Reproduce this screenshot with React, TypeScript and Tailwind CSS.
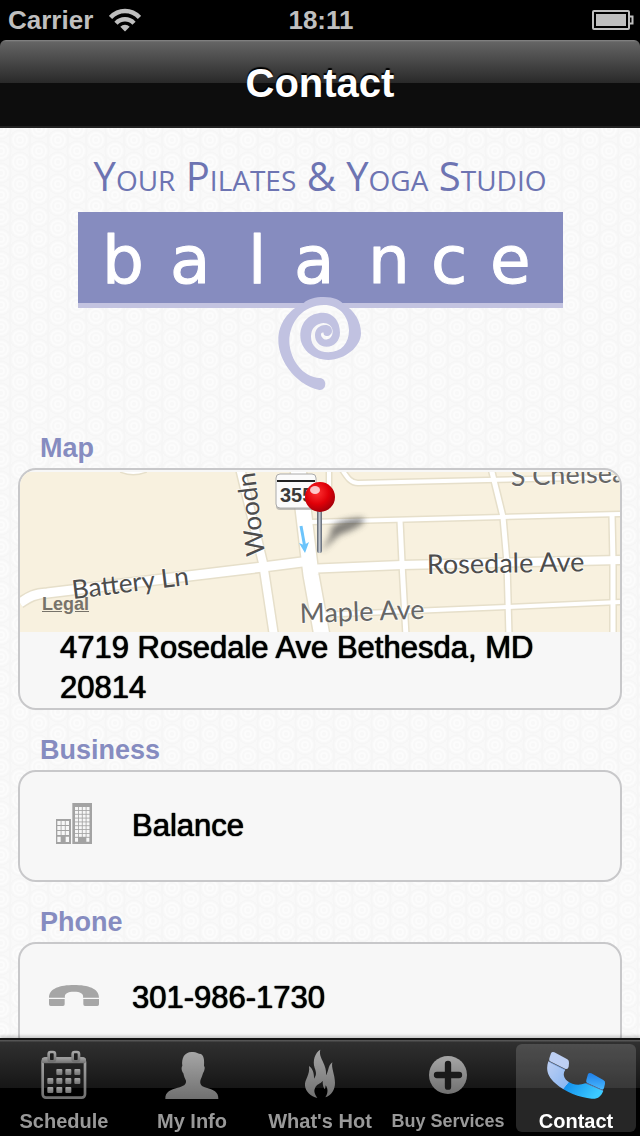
import type { ReactNode } from "react";
import clsx from "clsx";

function StatusBar() {
  return (
    <div className="grid h-10 shrink-0 grid-cols-3 items-center bg-black pr-1.5 pl-2 text-[26px] leading-10 font-bold text-[#bfbfbf]">
      <div className="flex items-center gap-4">
        <span>Carrier</span>
        <svg className="h-6 w-8" viewBox="0 0 32 24" fill="none" stroke="#bfbfbf" strokeWidth="4.5">
          <path d="M1.5 9.5 C9.5 0.8 22.5 0.8 30.5 9.5" />
          <path d="M7 15.2 C12 10 20 10 25 15.2" />
          <path d="M16 23.5 L11.3 18.8 C14 16 18 16 20.7 18.8 Z" fill="#bfbfbf" stroke="none" />
        </svg>
      </div>
      <span className="text-center">18:11</span>
      <svg className="h-5 w-[42px] justify-self-end" viewBox="0 0 42 20">
        <rect x="1" y="1" width="36" height="18" rx="1" fill="none" stroke="#bfbfbf" strokeWidth="2" />
        <rect x="4" y="4" width="30" height="12" fill="#bfbfbf" />
        <path d="M38 6.5 h2.5 v7 h-2.5" fill="none" stroke="#bfbfbf" strokeWidth="2" />
      </svg>
    </div>
  );
}

// faint concentric rings tiled behind the page
function Wallpaper() {
  const centers = [
    [19, 11],
    [0, 0],
    [38, 0],
    [0, 22],
    [38, 22],
  ];
  return (
    <svg className="absolute inset-0 h-full w-full" aria-hidden="true">
      <defs>
        <pattern id="rings" width="38" height="22" patternUnits="userSpaceOnUse" patternTransform="translate(1 1)">
          <rect width="38" height="22" fill="#f9f9f9" />
          <path d="M9 0 V22 M29 0 V22" stroke="#f6f6f6" strokeWidth="2" />
          {centers.map(([x, y]) => (
            <g key={`${x}-${y}`} fill="none" stroke="#fcfcfc" strokeWidth="2">
              <circle cx={x} cy={y} r="10" fill="#f8f8f8" stroke="#f6f6f6" strokeWidth="1" />
              <circle cx={x} cy={y} r="7" />
              <circle cx={x} cy={y} r="3" />
            </g>
          ))}
        </pattern>
      </defs>
      <rect width="100%" height="100%" fill="url(#rings)" />
    </svg>
  );
}

function Logo() {
  return (
    <div className="flex flex-col items-center pt-7 pb-9">
      <p className="font-['Open_Sans'] text-[40px] leading-10 font-medium whitespace-nowrap text-[#6d74b2] [font-variant-caps:small-caps]">
        Your Pilates &amp; Yoga Studio
      </p>
      <svg className="mt-4 h-[180px] w-[485px]" viewBox="0 0 485 180">
        <rect width="485" height="92" fill="#868cbf" />
        <rect y="91" width="485" height="5" fill="#c3c3e0" />
        <text
          x="24 92 170 216 290 353 412"
          y="71"
          fill="#fff"
          stroke="#fff"
          strokeWidth="1"
          strokeLinejoin="round"
          fontFamily="DejaVu Sans, sans-serif"
          fontSize="66"
        >
          balance
        </text>
        <g transform="translate(182 78) scale(0.3333)">
          <path d="M120 62 C150 46 170 42 192 42 C215 42 235 48 250 62Z" fill="#fafafa" />
          <path
            fill="#c1c2e1"
            d="M178 300 C110 285 55 215 55 150 C55 100 85 60 132 38 C145 27 165 21 192 21 C222 21 240 30 250 42 C285 62 303 95 303 130 C303 170 255 210 205 210 C155 208 121 175 121 137 C121 95 150 68 190 68 C222 70 240 95 240 128 C240 152 222 170 200 170 C178 170 165 155 165 135 C165 118 178 105 196 105 C208 105 216 112 216 122 C216 132 208 139 199 138 C194 138 190 134 191 128 C183 126 181 134 185 140 C190 148 196 150 202 148 C212 146 218 135 218 125 C218 108 205 99 190 99 C168 101 153 115 153 140 C153 168 175 187 205 187 C245 186 267 160 267 120 C265 75 235 45 192 45 C130 45 88 95 88 155 C90 210 130 262 180 264 C203 266 200 303 178 300Z"
          />
        </g>
      </svg>
    </div>
  );
}

const roads = [
  { d: "M0 131 C8 126 12 122 27 121 L243 95 L290 89", w: 9 },
  { d: "M285 97 L382 93 L600 88", w: 8 },
  { d: "M220 -4 L243 91 L254 164", w: 8 },
  { d: "M278 -4 L283 36 L291 103 L302 164", w: 15 },
  { d: "M290 50 L483 45 L600 42", w: 4 },
  { d: "M309 -4 V20", w: 4 },
  { d: "M321 -4 C327 5 330 11 338 11 L467 8 L600 5", w: 4 },
  { d: "M471 -4 L483 45 L487 91 L489 164", w: 5 },
  { d: "M380 48 L382 91 L386 164", w: 5 },
  { d: "M592 42 L593 91 V164", w: 5 },
  { d: "M296 143 L487 135 L600 130", w: 4 },
  { d: "M101 -2 Q113 3 126 -2", w: 3 },
];

function MapView() {
  return (
    <div className="relative h-40 overflow-hidden">
      <svg className="h-full w-full" viewBox="0 0 600 160" preserveAspectRatio="xMidYMid slice">
        <defs>
          <radialGradient id="pinHead" cx="0.4" cy="0.35" r="0.65">
            <stop offset="0" stopColor="#f33" />
            <stop offset="0.6" stopColor="#e00008" />
            <stop offset="1" stopColor="#a8000a" />
          </radialGradient>
          <linearGradient id="pinStem">
            <stop offset="0" stopColor="#555d68" />
            <stop offset="0.5" stopColor="#c5cad2" />
            <stop offset="1" stopColor="#59616d" />
          </linearGradient>
          <filter id="soft" x="-30%" y="-30%" width="160%" height="160%">
            <feGaussianBlur stdDeviation="3" />
          </filter>
        </defs>
        <rect width="600" height="160" fill="#f8f1df" />
        <g fill="none" stroke="#e6dfca">
          {roads.map((r) => (
            <path key={r.d} d={r.d} strokeWidth={r.w + 3} />
          ))}
        </g>
        <g fill="none" stroke="#fff">
          {roads.map((r) => (
            <path key={r.d} d={r.d} strokeWidth={r.w} />
          ))}
        </g>
        <g
          fontFamily="Lato, sans-serif"
          fontSize="27"
          fill="#4d4d4d"
          stroke="#fff"
          strokeOpacity="0.5"
          strokeWidth="2"
          paintOrder="stroke"
        >
          <text transform="translate(53 127) rotate(-7)" fontSize="26">
            Battery Ln
          </text>
          <text transform="translate(245 83) rotate(-97)" fontSize="26">
            Woodn
          </text>
          <text transform="translate(407 102) rotate(-1)">Rosedale Ave</text>
          <text transform="translate(280 151) rotate(-2)" fill="#666">
            Maple Ave
          </text>
          <text transform="translate(491 14) rotate(-2)" fill="#666">
            S Chelsea
          </text>
        </g>
        <rect x="256" y="4" width="40" height="34" rx="4" fill="#999" opacity="0.6" />
        <rect x="256" y="2" width="40" height="34" rx="4" fill="#fbfbfb" stroke="#aaa" />
        <path d="M257 9 H295" stroke="#222" strokeWidth="2" />
        <text x="260" y="30" fontSize="20" fontWeight="bold" fill="#3a3a3a" fontFamily="Liberation Sans Narrow, Liberation Sans, sans-serif">
          355
        </text>
        <path d="M281 54 L285 76" fill="none" stroke="#6cc4fb" strokeWidth="3" />
        <path d="M279 71 L284 73 L289 70 L285 81Z" fill="#6cc4fb" />
        <path d="M301 80 L311 62 C308 52 326 46 343 46 C348 51 334 58 319 63 Z" fill="#444" opacity="0.65" filter="url(#soft)" />
        <rect x="297" y="38" width="5" height="43" rx="2" fill="url(#pinStem)" />
        <circle cx="300" cy="25" r="15" fill="url(#pinHead)" />
        <ellipse cx="295" cy="18" rx="5" ry="4" fill="#fff" opacity="0.75" />
      </svg>
      <a href="#legal" className="absolute bottom-4 left-[22px] text-[18px] leading-6 font-bold text-[#77736a] underline">
        Legal
      </a>
    </div>
  );
}

function BuildingIcon() {
  const windows: ReactNode[] = [];
  for (let r = 0; r < 8; r++) {
    for (let c = 0; c < 4; c++) {
      windows.push(<rect key={`t${r}${c}`} x={225 + c * 11.5} y={231 + r * 11.5} width="9" height="9" />);
    }
  }
  for (let r = 0; r < 3; r++) {
    for (let c = 0; c < 3; c++) {
      windows.push(<rect key={`s${r}${c}`} x={172 + c * 12.5} y={273 + r * 15} width="10" height="12" />);
    }
  }
  return (
    <svg className="h-[50px] w-[60px]" viewBox="132 213 180 150">
      <path d="M217 219 h59 v123 h-59z M168 267 h45 v75 h-45z" fill="#a3a3a3" />
      <g fill="#f7f7f7">
        {windows}
        <path d="M225 323 h9 v12 h-9z M259 323 h9 v12 h-9z M172 320 h10 v16 h-10z M197 320 h10 v16 h-10z" />
      </g>
    </svg>
  );
}

function HandsetIcon() {
  return (
    <svg className="h-[50px] w-[60px]" viewBox="132 729 180 150" fill="#a6a6a6">
      <path d="M147 803 C147 775 180 765 222 765 C264 765 297 775 297 803 H249 C252 790 240 785 222 785 C204 785 192 790 195 803Z" />
      <path d="M147 807 h47 v16 q0 5 -5 5 h-37 q-5 0 -5 -5z M250 807 h47 v16 q0 5 -5 5 h-37 q-5 0 -5 -5z" />
    </svg>
  );
}

function Section({ title, children }: { title: string; children: ReactNode }) {
  return (
    <section className="mb-5">
      <h2 className="pl-[22px] text-[27px] leading-10 font-bold text-[#868cc0]">{title}</h2>
      <div className="overflow-hidden rounded-[18px] border-2 border-[#c8c8ca] bg-[#f7f7f7] text-[31px] leading-10 text-black">
        {children}
      </div>
    </section>
  );
}

function Row({ icon, children }: { icon: ReactNode; children: ReactNode }) {
  return (
    <div className="flex h-[108px] items-center gap-7 px-6 [text-shadow:0_0_1px_#000,0_0_1px_#000]">
      {icon}
      {children}
    </div>
  );
}

function CalendarIcon() {
  const days = [
    [168, 117], [195, 117], [222, 117],
    [141, 144], [168, 144], [195, 144], [222, 144],
    [141, 171], [168, 171], [195, 171],
  ];
  return (
    <svg className="h-[54px] w-[60px]" viewBox="101 54 180 162">
      <rect x="127" y="86" width="127" height="117" rx="10" fill="none" stroke="url(#tabFill)" strokeWidth="8" />
      <rect x="124" y="82" width="133" height="18" rx="8" fill="url(#tabFill)" />
      <g fill="#1c1c1c" stroke="url(#tabFill)" strokeWidth="8">
        <rect x="145" y="66" width="19" height="28" rx="6" />
        <rect x="217" y="66" width="19" height="28" rx="6" />
      </g>
      {days.map(([x, y]) => (
        <rect key={`${x}-${y}`} x={x} y={y} width="18" height="18" rx="3" fill="url(#tabFill)" />
      ))}
    </svg>
  );
}

function PersonIcon() {
  return (
    <svg className="h-[54px] w-[60px]" viewBox="485 54 180 162">
      <path
        fill="url(#tabFill)"
        d="M574 66 C586 64 593 71 602 72 C612 78 612 94 611 108 C616 112 611 125 608 130 C605 140 602 146 600 152 C598 164 606 170 618 173 C638 179 655 184 654 207 H495 C494 184 512 179 532 173 C550 168 558 164 557 152 C554 146 551 140 549 130 C544 124 542 112 546 108 C543 84 552 67 574 66Z"
      />
    </svg>
  );
}

function FlameIcon() {
  return (
    <svg className="h-[54px] w-[60px]" viewBox="0 24 180 162">
      <path
        fill="url(#tabFill)"
        d="M91 29 C86 45 97 58 103 75 C108 88 109 98 108 106 C116 96 113 78 127 67 C123 84 135 104 135 128 C135 150 124 166 106 172 C116 158 113 144 107 136 L105 147 C101 144 98 137 98 122 C90 134 80 130 75 145 C70 155 76 166 82 174 C62 169 47 155 45 137 C43 119 61 105 57 78 C67 84 73 100 72 116 C79 106 80 100 74 84 C67 62 75 38 91 29Z"
      />
    </svg>
  );
}

function PlusIcon() {
  return (
    <svg className="h-[54px] w-[60px]" viewBox="294 54 180 162">
      <circle cx="384" cy="135" r="57" fill="url(#tabFill)" />
      <path d="M384 102 V170 M351 135 H417" stroke="#1a1a1a" strokeWidth="19" strokeLinecap="round" />
    </svg>
  );
}

function BlueHandsetIcon() {
  return (
    <svg className="h-[54px] w-[60px]" viewBox="678 54 180 162">
      <defs>
        <linearGradient id="blueEnd" x1="0" y1="0" x2="0" y2="1">
          <stop offset="0" stopColor="#1f7fe8" />
          <stop offset="1" stopColor="#48b8ff" />
        </linearGradient>
        <linearGradient id="blueBody" gradientUnits="userSpaceOnUse" x1="690" y1="100" x2="820" y2="205">
          <stop offset="0" stopColor="#b9cdf3" />
          <stop offset="0.47" stopColor="#8db8f2" />
          <stop offset="0.48" stopColor="#1492ee" />
          <stop offset="1" stopColor="#3ccaff" />
        </linearGradient>
      </defs>
      <path
        fill="url(#blueBody)"
        d="M685 94 L736 119 C728 130 730 142 742 153 C756 164 776 168 796 160 L850 182 C844 199 832 208 815 206 C780 203 735 187 706 160 C682 140 677 118 685 94Z"
      />
      <path fill="#bdcff3" d="M693 70 Q696 64 703 67 L742 88 Q748 92 747 99 L746 110 Q744 119 735 116 L690 94 Q686 92 688 85Z" />
      <path fill="url(#blueEnd)" d="M804 132 Q808 127 814 130 L850 150 Q857 154 855 161 L852 174 Q850 181 843 178 L802 159 Q797 157 799 150Z" />
      <path d="M688 96 L734 119 M799 160 L849 182" stroke="#6a94d4" strokeWidth="2" />
    </svg>
  );
}

const tabs = [
  { label: "Schedule", icon: <CalendarIcon /> },
  { label: "My Info", icon: <PersonIcon /> },
  { label: "What's Hot", icon: <FlameIcon /> },
  { label: "Buy Services", icon: <PlusIcon />, small: true },
  { label: "Contact", icon: <BlueHandsetIcon />, active: true },
];

function TabBar() {
  return (
    <nav className="relative grid shrink-0 grid-cols-5 border-t-2 border-[#141414] bg-[linear-gradient(#555_0,#555_1px,#303030_2px,#161616_50%,#000_50%)] pt-1 pb-1 shadow-[0_-2px_3px_rgba(0,0,0,0.2)]">
      {tabs.map((tab) => (
        <button
          key={tab.label}
          type="button"
          className={clsx(
            "mx-1 flex h-[88px] flex-col items-center gap-2 rounded-md pt-1 leading-[22px] font-bold whitespace-nowrap",
            tab.small ? "text-[18px]" : "text-[20px]",
            tab.active ? "bg-white/15 text-white" : "text-[#999]",
          )}
        >
          {tab.icon}
          {tab.label}
        </button>
      ))}
    </nav>
  );
}

export default function App() {
  return (
    <div className="flex h-screen flex-col bg-black font-['Liberation_Sans',Arial,sans-serif]">
      <svg className="absolute h-0 w-0" aria-hidden="true">
        <linearGradient id="tabFill" x1="0" y1="0" x2="0" y2="1">
          <stop offset="0" stopColor="#a6a6a6" />
          <stop offset="1" stopColor="#707070" />
        </linearGradient>
      </svg>
      <StatusBar />
      <header className="flex h-[88px] shrink-0 items-center justify-center rounded-t-md border-b-2 border-[#222] bg-[linear-gradient(#888_0,#646464_2px,#292929_50%,#0d0d0d_50%)]">
        <h1 className="text-[40px] leading-none font-bold text-white [text-shadow:0_-2px_1px_#000]">Contact</h1>
      </header>
      <main className="relative flex-1 overflow-y-auto bg-[#f8f8f8] [scrollbar-width:none]">
        <div className="relative">
          <Wallpaper />
          <div className="relative px-[18px] pb-1">
            <Logo />
            <Section title="Map">
              <div className="pt-0.5">
                <MapView />
                <p className="relative -mt-1 px-10 [text-shadow:0_0_1px_#000,0_0_1px_#000]">
                  4719 Rosedale Ave Bethesda, MD 20814
                </p>
              </div>
            </Section>
            <Section title="Business">
              <Row icon={<BuildingIcon />}>Balance</Row>
            </Section>
            <Section title="Phone">
              <Row icon={<HandsetIcon />}>
                <a href="tel:301-986-1730">301-986-1730</a>
              </Row>
            </Section>
          </div>
        </div>
      </main>
      <TabBar />
    </div>
  );
}
